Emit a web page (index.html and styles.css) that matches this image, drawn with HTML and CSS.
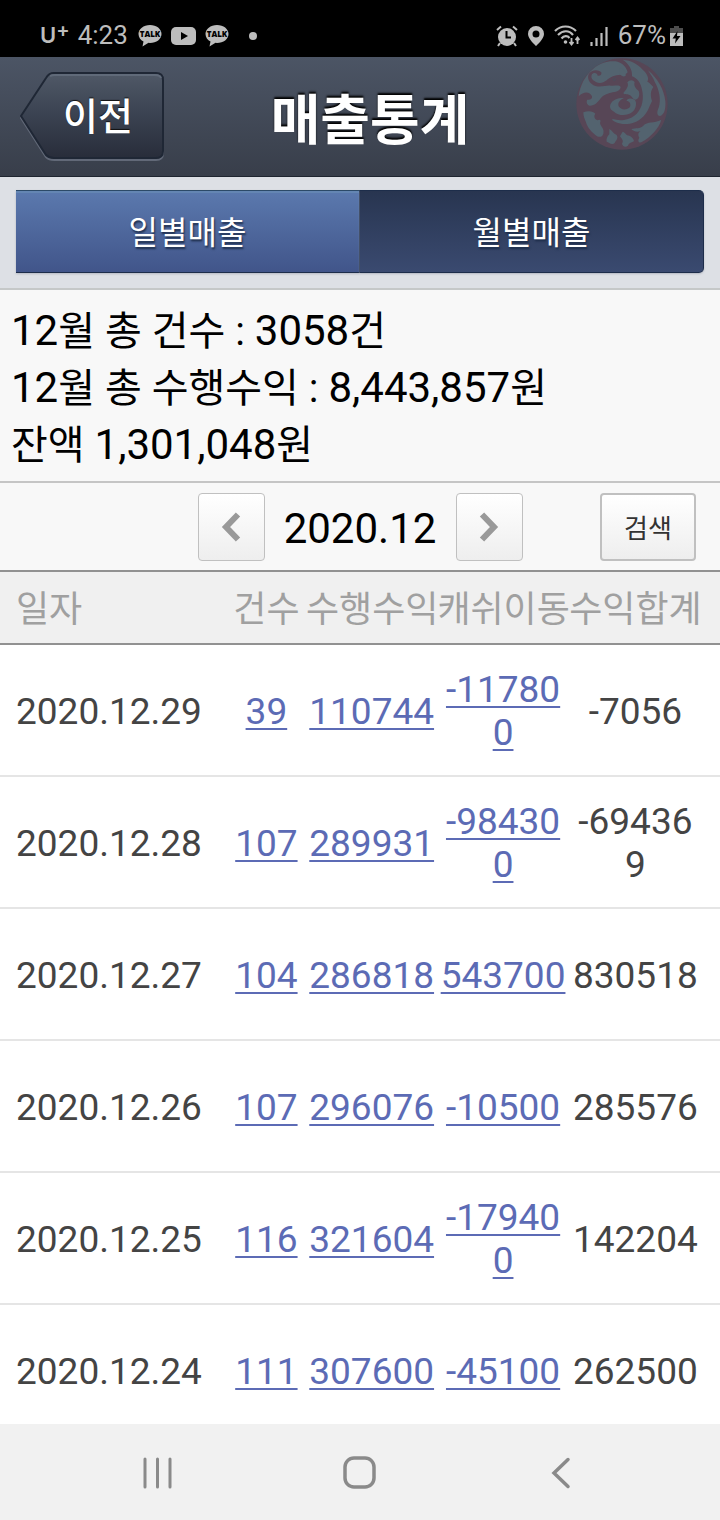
FILE: index.html
```html
<!DOCTYPE html>
<html lang="ko">
<head>
    <meta charset="UTF-8">
    <meta name="viewport" content="width=device-width, initial-scale=1.0">
    <title>매출통계</title>
    <link rel="stylesheet" href="styles.css">
</head>
<body>
    <div class="status-bar">
        <div class="status-left">
            <span class="carrier">U<span class="carrier-plus">+</span></span>
            <span class="clock">4:23</span>
            <svg class="talk-icon" width="24" height="24" viewBox="0 0 24 24">
                <path d="M12 1C5.500 1 .5 5 .5 10c0 3.200 2 6 5 7.500L4.500 22.500l6-3.700 1.500.1c6.500 0 11.500-4 11.500-9S18.500 1 12 1z" fill="#bdbdbd"/>
                <text x="12" y="13" text-anchor="middle" class="talk-text">TALK</text>
            </svg>
            <svg class="tube-icon" width="25" height="18" viewBox="0 0 25 18">
                <rect width="25" height="18" rx="5" fill="#bdbdbd"/>
                <path d="M10 5l7 4-7 4z" fill="#000"/>
            </svg>
            <svg class="talk-icon" width="24" height="24" viewBox="0 0 24 24">
                <path d="M12 1C5.500 1 .5 5 .5 10c0 3.200 2 6 5 7.500L4.500 22.500l6-3.700 1.500.1c6.500 0 11.500-4 11.500-9S18.500 1 12 1z" fill="#bdbdbd"/>
                <text x="12" y="13" text-anchor="middle" class="talk-text">TALK</text>
            </svg>
            <span class="more-dot"></span>
        </div>
        <div class="status-right">
            <svg width="22" height="22" viewBox="0 0 22 22">
                <circle cx="11" cy="12" r="9" fill="#bdbdbd"/>
                <path d="M1 5l4-3.500M21 5l-4-3.500M4 18l-2 3M18 18l2 3" stroke="#bdbdbd" stroke-width="2"/>
                <path d="M10.500 6v6.500h4.500" fill="none" stroke="#000" stroke-width="2"/>
            </svg>
            <svg width="16" height="22" viewBox="0 0 16 22">
                <path d="M8 1a8 8 0 0 0-8 8c0 5 8 12 8 12s8-7 8-12a8 8 0 0 0-8-8zm0 4.500a3.500 3.500 0 1 1 0 7 3.500 3.500 0 0 1 0-7z" fill="#bdbdbd"/>
            </svg>
            <svg width="26" height="22" viewBox="0 0 26 22">
                <path d="M1 6c6-6 15-6 21 0M4 10c5-5 11-5 15 0M7.500 13.500c2.500-3 6-3 8-.5" fill="none" stroke="#bdbdbd" stroke-width="2.200"/>
                <circle cx="11.500" cy="17" r="1.800" fill="#bdbdbd"/>
                <path d="M17.500 13v6M15.500 17l2 2.500 2-2.500M23.500 19v-6M21.500 15l2-2.500 2 2.500" fill="none" stroke="#bdbdbd" stroke-width="1.800"/>
            </svg>
            <svg width="18" height="22" viewBox="0 0 18 22">
                <path d="M1.500 21v-4M6.500 21v-8M11.500 21V8M16.500 21V2" stroke="#bdbdbd" stroke-width="2.200"/>
            </svg>
            <span class="battery-text">67%</span>
            <svg width="13" height="22" viewBox="0 0 13 22">
                <path d="M4 1h5v2h4v6H0V3h4z" fill="#4d4d4d"/>
                <path d="M0 8h13v13H0z" fill="#bdbdbd"/>
                <path d="M7.500 6L2.500 13.500h3.300L5 18.500l5.500-7.500H7z" fill="#000"/>
            </svg>
        </div>
    </div>

    <header class="header">
        <button class="back-button" type="button">
            <svg class="back-shape" width="144" height="90" viewBox="0 0 144 90">
                <defs>
                    <linearGradient id="backFill" x1="0" y1="0" x2="0" y2="1">
                        <stop offset="0" stop-color="#505967"/>
                        <stop offset=".45" stop-color="#3c4453"/>
                        <stop offset="1" stop-color="#282d3a"/>
                    </linearGradient>
                </defs>
                <path d="M1 46L26 7Q29 3 34 3H136Q143 3 143 10V81Q143 88 136 88H34Q29 88 26 85Z" fill="none" stroke="#626978" stroke-width="2"/>
                <path d="M1 44L26 6Q29 1 34 1H136Q143 1 143 8V79Q143 86 136 86H34Q29 86 26 83Z" fill="url(#backFill)" stroke="#1f2735" stroke-width="2"/>
                <path d="M30 4Q32 3 35 3H135Q140 3 141 6" fill="none" stroke="#606a79" stroke-width="2"/>
            </svg>
            <span class="back-label">이전</span>
        </button>
        <h1 class="title">매출통계</h1>
        <svg class="emblem" width="92" height="92" viewBox="48 23 276 276">
            <circle cx="186" cy="161" r="137" fill="#574656"/>
            <g fill="#53636f">
                <!-- sky behind the head -->
                <path d="M56 138C60 105 75 76 100 55C122 37 144 31 166 33C184 35 198 48 203 66C194 76 190 72 176 74C158 76 148 82 140 90C130 98 118 100 108 95C94 89 92 79 96 72C102 65 112 68 113 76C120 78 126 74 124 66C114 56 94 58 86 72C80 86 90 102 106 107C124 112 140 104 152 106C166 108 176 102 182 110C180 120 172 124 158 126C142 129 130 134 122 144C112 158 104 166 90 166C80 164 78 154 82 148C90 150 98 146 96 138C90 124 72 122 56 138Z"/>
                <!-- neck feathers -->
                <path d="M188 28C214 30 234 42 248 58C262 70 268 84 262 94C270 98 274 104 280 110C272 122 270 134 276 152C266 172 262 190 244 204C226 222 190 226 168 216C160 212 154 208 158 206C184 214 212 208 230 190C248 172 252 142 246 118C242 96 232 84 216 78C218 58 206 40 188 28Z"/>
                <path d="M202 96C208 88 220 88 224 96C220 106 228 116 236 122C240 132 238 146 226 148C216 146 216 136 208 134C200 130 192 134 190 128C198 118 208 108 202 96Z"/>
                <path d="M181 52C192 56 199 66 197 76C188 82 182 74 176 68Z"/>
                <!-- outer wing -->
                <path d="M264 60C292 84 312 116 316 152C318 176 312 194 300 197C290 196 290 184 296 172C304 148 298 118 284 94C280 80 270 72 264 60Z"/>
                <!-- spiral -->
                <path d="M150 168C152 152 172 140 192 144C180 148 172 158 176 168C182 180 202 180 210 170C214 160 208 152 200 152C200 144 212 142 224 148C232 156 228 176 216 186C200 198 174 196 162 184C154 180 150 176 150 168Z"/>
                <!-- tail feathers -->
                <path d="M70 186C84 180 100 182 106 190C100 198 104 206 112 210C120 206 124 210 120 218C122 230 134 234 130 250C126 262 116 262 106 254C96 246 82 232 78 216C74 206 70 198 70 186Z"/>
                <path d="M148 236C156 240 160 250 170 254C176 264 168 270 164 278C156 286 146 276 140 274C138 266 142 258 148 252Z"/>
                <path d="M188 244C196 246 198 256 208 256C216 260 220 264 222 272C214 278 208 276 204 286C196 292 188 288 186 280C192 272 186 266 180 258Z"/>
                <path d="M214 236C228 232 240 236 250 226C262 212 282 220 304 208C296 236 272 260 244 276C236 278 232 272 238 262C232 252 236 246 242 242C232 246 222 244 214 236Z"/>
            </g>
            <circle cx="163" cy="87" r="4" fill="none" stroke="#47515f" stroke-width="2"/>
        </svg>
    </header>

    <nav class="tabs">
        <button class="tab tab-daily" type="button">일별매출</button>
        <button class="tab tab-monthly" type="button">월별매출</button>
    </nav>

    <main class="content">
        <section class="summary">
            <p><span class="num">12</span>월 총 건수 : <span class="num">3058</span>건</p>
            <p><span class="num">12</span>월 총 수행수익 : <span class="num">8,443,857</span>원</p>
            <p>잔액 <span class="num">1,301,048</span>원</p>
        </section>

        <div class="month-bar">
            <div class="month-picker">
                <button class="arrow-button" type="button" aria-label="이전 달">
                    <svg width="20" height="30" viewBox="0 0 20 30"><path d="M17 2.500L5 15l12 12.500" fill="none" stroke="#999" stroke-width="6"/></svg>
                </button>
                <span class="month">2020.12</span>
                <button class="arrow-button" type="button" aria-label="다음 달">
                    <svg width="20" height="30" viewBox="0 0 20 30"><path d="M3 2.500L15 15 3 27.500" fill="none" stroke="#999" stroke-width="6"/></svg>
                </button>
            </div>
            <button class="search-button" type="button">검색</button>
        </div>

        <table class="sales">
            <thead>
                <tr>
                    <th class="col-date">일자</th>
                    <th class="col-count">건수</th>
                    <th class="col-amount">수행수익</th>
                    <th class="col-amount">캐쉬이동</th>
                    <th class="col-total">수익합계</th>
                </tr>
            </thead>
            <tbody>
                <tr>
                    <td>2020.12.29</td>
                    <td><a href="#">39</a></td>
                    <td><a href="#">110744</a></td>
                    <td><a href="#">-117800</a></td>
                    <td>-7056</td>
                </tr>
                <tr>
                    <td>2020.12.28</td>
                    <td><a href="#">107</a></td>
                    <td><a href="#">289931</a></td>
                    <td><a href="#">-984300</a></td>
                    <td>-694369</td>
                </tr>
                <tr>
                    <td>2020.12.27</td>
                    <td><a href="#">104</a></td>
                    <td><a href="#">286818</a></td>
                    <td><a href="#">543700</a></td>
                    <td>830518</td>
                </tr>
                <tr>
                    <td>2020.12.26</td>
                    <td><a href="#">107</a></td>
                    <td><a href="#">296076</a></td>
                    <td><a href="#">-10500</a></td>
                    <td>285576</td>
                </tr>
                <tr>
                    <td>2020.12.25</td>
                    <td><a href="#">116</a></td>
                    <td><a href="#">321604</a></td>
                    <td><a href="#">-179400</a></td>
                    <td>142204</td>
                </tr>
                <tr>
                    <td>2020.12.24</td>
                    <td><a href="#">111</a></td>
                    <td><a href="#">307600</a></td>
                    <td><a href="#">-45100</a></td>
                    <td>262500</td>
                </tr>
            </tbody>
        </table>
    </main>

    <nav class="nav-bar">
        <button class="nav-button" type="button" aria-label="최근 앱">
            <svg width="34" height="34" viewBox="0 0 34 34"><path d="M4 4v28M16.500 4v28M29 4v28" stroke="#8a8a8a" stroke-width="3" stroke-linecap="round"/></svg>
        </button>
        <button class="nav-button" type="button" aria-label="홈">
            <svg width="34" height="34" viewBox="0 0 34 34"><rect x="2" y="3" width="29" height="29" rx="9" fill="none" stroke="#8a8a8a" stroke-width="3.500"/></svg>
        </button>
        <button class="nav-button" type="button" aria-label="뒤로">
            <svg width="34" height="34" viewBox="0 0 34 34"><path d="M23 4.500L9 18l14 13.500" fill="none" stroke="#8a8a8a" stroke-width="3.500" stroke-linecap="round"/></svg>
        </button>
    </nav>
</body>
</html>
```
FILE: styles.css
```css
* {
    box-sizing: border-box;
}

body {
    margin: 0;
    height: 100vh;
    display: flex;
    flex-direction: column;
    background-color: white;
    font-family: Roboto, "Noto Sans CJK KR", sans-serif;
}

button {
    padding: 0;
    border: none;
    background: none;
    font-family: inherit;
    cursor: pointer;
}

svg {
    display: block;
}

/* phone status bar */
.status-bar {
    flex: none;
    display: flex;
    justify-content: space-between;
    height: 57px;
    padding: 14px 37px 0 40px;
    background-color: black;
    color: #bdbdbd;
    font-size: 26px;
    line-height: 43px;
}

.status-left,
.status-right {
    display: flex;
    align-items: center;
}

.status-right {
    gap: 10px;
}

.carrier {
    font-family: Inter, sans-serif;
    font-size: 22px;
    font-weight: 600;
}

.carrier-plus {
    font-size: 20px;
    line-height: 20px;
    vertical-align: 6px;
}

.clock {
    margin: 0 10px 0 8px;
}

.tube-icon {
    margin: 0 9px;
}

.talk-text {
    font-family: "Open Sans", sans-serif;
    font-size: 8px;
    font-weight: 800;
    fill: black;
}

.more-dot {
    width: 8px;
    height: 8px;
    margin-left: 20px;
    border-radius: 50%;
    background-color: #bdbdbd;
}

.battery-text {
    margin-right: -6px;
}

/* title bar */
.header {
    flex: none;
    display: flex;
    align-items: flex-start;
    height: 120px;
    padding: 1px 52px 0 20px;
    border-bottom: 1px solid #1f2530;
    background: linear-gradient(#4c5565, #383e4a);
}

.back-button {
    position: relative;
    width: 144px;
    height: 90px;
    margin-top: 14px;
    padding-left: 12px;
    color: white;
    font-size: 38px;
    font-weight: 500;
    line-height: 88px;
    text-shadow: 0 -1px 1px #111;
}

.back-shape {
    position: absolute;
    left: 0;
    top: 0;
}

.back-label {
    position: relative;
}

.title {
    flex: 1;
    margin: 0;
    padding-top: 4px;
    color: white;
    font-size: 54px;
    font-weight: 700;
    line-height: 120px;
    text-align: center;
    text-shadow: 0 -2px 2px #000;
}

/* daily / monthly tabs */
.tabs {
    flex: none;
    display: flex;
    height: 113px;
    padding: 13px 16px 15px;
    border-bottom: 2px solid #c5c8c8;
    background-color: #dde0e5;
}

.tab {
    flex: 1;
    padding-bottom: 3px;
    border: 1px solid #1d2d4a;
    color: white;
    font-size: 32px;
    font-weight: 400;
    text-shadow: 1px 2px 2px #1d2d4a;
}

.tab-daily {
    border-left: none;
    border-top-color: #2c4a68;
    background: linear-gradient(#5b79ae, #41558a);
    box-shadow: inset 0 2px #6486b3, 0 1px 2px #b4b8c2;
}

.tab-monthly {
    border-left: none;
    border-radius: 0 5px 5px 0;
    background: linear-gradient(#283550, #3a4a70);
    box-shadow: 0 1px 2px #b4b8c2;
}

/* scrolling part */
.content {
    flex: 1;
    min-height: 0;
    overflow-y: auto;
    scrollbar-width: none;
}

.summary {
    padding: 12px 11px 8px;
    border-bottom: 2px solid #c5c5c5;
    background-color: #f8f8f8;
    color: black;
    font-size: 40px;
    line-height: 57px;
}

.summary p {
    margin: 0;
    height: 57px;
}

.num {
    font-size: 42px;
}

.month-bar {
    display: flex;
    align-items: center;
    justify-content: center;
    position: relative;
    height: 87px;
    background-color: #f8f8f8;
}

.month-picker {
    display: flex;
    align-items: center;
}

.month {
    width: 191px;
    padding-top: 3px;
    font-size: 42px;
    text-align: center;
}

.arrow-button {
    display: flex;
    align-items: center;
    justify-content: center;
    width: 67px;
    height: 68px;
    border: 1px solid #c0c0c0;
    border-radius: 4px;
    background: linear-gradient(#fff, #eee);
}

.search-button {
    position: absolute;
    right: 24px;
    width: 96px;
    height: 68px;
    border: 2px solid #c0c0c0;
    border-radius: 4px;
    background: linear-gradient(#fff, #eee);
    color: #333;
    font-size: 26px;
}

/* sales table */
.sales {
    width: 100%;
    table-layout: fixed;
    border-collapse: separate;
    border-spacing: 0;
}

.sales th {
    height: 75px;
    padding: 6px 0 0;
    border-top: 2px solid #919191;
    border-bottom: 2px solid #919191;
    background-color: #f0f0f0;
    color: #a0a0a0;
    font-size: 36px;
    font-weight: 400;
    line-height: 43px;
    white-space: nowrap;
}

.sales td {
    height: 132px;
    padding: 2px 0 0;
    border-bottom: 2px solid #e5e5e5;
    color: #444;
    font-size: 37px;
    line-height: 43px;
    text-align: center;
    word-break: break-all;
}

.sales th:first-child,
.sales td:first-child {
    padding-left: 16px;
    text-align: left;
}

.sales th:last-child,
.sales td:last-child {
    padding-right: 18px;
}

.sales a {
    color: #5c6bb5;
    text-decoration: underline;
    text-decoration-thickness: 2px;
    text-underline-offset: 4px;
}

.col-date {
    width: 31.5%;
}

.col-count {
    width: 11%;
}

.col-amount {
    width: 18.25%;
}

.col-total {
    width: 21%;
}

/* phone navigation */
.nav-bar {
    flex: none;
    display: flex;
    justify-content: center;
    height: 96px;
    background-color: #f1f1f1;
}

.nav-button {
    display: flex;
    align-items: center;
    justify-content: center;
    width: 28%;
}
```
